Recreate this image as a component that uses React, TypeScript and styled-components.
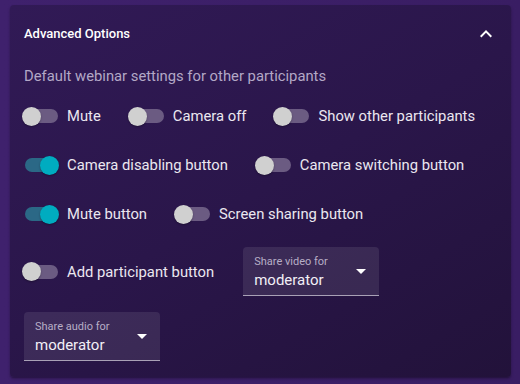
import React, { useState } from 'react';
import styled, { createGlobalStyle } from 'styled-components';

const GlobalStyle = createGlobalStyle`
    html, body {
        margin: 0;
        padding: 0;
    }
    body {
        width: 520px;
        height: 384px;
        overflow: hidden;
        background: linear-gradient(90deg, #3f216d 0%, #391d63 100%);
        font-family: Roboto, "Liberation Sans", Arial, sans-serif;
    }
`;

type Option = { key: string; label: string; on: boolean };

const rows: Option[][] = [
    [
        { key: 'mute', label: 'Mute', on: false },
        { key: 'cameraOff', label: 'Camera off', on: false },
        { key: 'showOthers', label: 'Show other participants', on: false },
    ],
    [
        { key: 'camDisable', label: 'Camera disabling button', on: true },
        { key: 'camSwitch', label: 'Camera switching button', on: false },
    ],
    [
        { key: 'muteBtn', label: 'Mute button', on: true },
        { key: 'screenShare', label: 'Screen sharing button', on: false },
    ],
];

const App = () => {
    const initial: Record<string, boolean> = {};
    rows.flat().forEach(o => (initial[o.key] = o.on));
    const [values, setValues] = useState(initial);
    const [addBtn, setAddBtn] = useState(false);

    const toggle = (key: string) => setValues(v => ({ ...v, [key]: !v[key] }));

    return (
        <>
            <GlobalStyle />
            <Card>
                <Summary>
                    <Title>Advanced Options</Title>
                    <svg width="24" height="24" viewBox="0 0 24 24">
                        <path d="M12 8l-6 6 1.41 1.41L12 10.83l4.59 4.58L18 14z" fill="#ffffff" />
                    </svg>
                </Summary>
                <Details>
                    <Subtitle>Default webinar settings for other participants</Subtitle>
                    {rows.map((row, i) => (
                        <Row key={i}>
                            {row.map(o => (
                                <Toggle
                                    key={o.key}
                                    label={o.label}
                                    checked={values[o.key]}
                                    onChange={() => toggle(o.key)}
                                />
                            ))}
                        </Row>
                    ))}
                    <Row $tall $top={14}>
                        <Toggle label="Add participant button" checked={addBtn} onChange={() => setAddBtn(!addBtn)} />
                        <SelectField label="Share video for" value="moderator" />
                    </Row>
                    <Row $tall $top={16}>
                        <SelectField label="Share audio for" value="moderator" />
                    </Row>
                </Details>
            </Card>
        </>
    );
};

export default App;

const Toggle = ({ label, checked, onChange }: { label: string; checked: boolean; onChange: () => void }) => (
    <Item onClick={onChange}>
        <SwitchBox>
            <Track $on={checked} />
            <Thumb $on={checked} />
        </SwitchBox>
        <Label>{label}</Label>
    </Item>
);

const SelectField = ({ label, value }: { label: string; value: string }) => (
    <Select>
        <SmallLabel>{label}</SmallLabel>
        <Value>{value}</Value>
        <Arrow viewBox="0 0 10 5" width="10" height="5">
            <path d="M0 0l5 5 5-5z" fill="#ffffff" />
        </Arrow>
    </Select>
);

const Card = styled.div`
    margin: 5px 9px 0 10px;
    width: 501px;
    border-radius: 4px;
    background: linear-gradient(150deg, #311a56 0%, #2a164a 50%, #22123a 100%);
    box-shadow: 0 2px 3px rgba(0, 0, 0, 0.25), 0 1px 1px rgba(0, 0, 0, 0.15);
    color: #ffffff;
`;

const Summary = styled.div`
    height: 56px;
    display: flex;
    align-items: center;
    justify-content: space-between;
    padding: 0 13px 0 14px;
    svg {
        margin-top: 1px;
    }
`;

const Title = styled.span`
    font-size: 13px;
    font-weight: 500;
    color: #ffffff;
`;

const Details = styled.div`
    padding: 5px 12px 16px 12px;
`;

const Subtitle = styled.div`
    font-size: 14.8px;
    line-height: 20px;
    color: #b3a8c6;
    padding-left: 2px;
    margin-bottom: 11px;
`;

interface RowProps {
    $tall?: boolean;
    $top?: number;
}
const Row = styled.div<RowProps>`
    display: flex;
    align-items: center;
    column-gap: 27px;
    height: ${props => (props.$tall ? '49px' : '38px')};
    margin-top: ${props => (props.$top !== undefined ? props.$top : 0)}px;
    margin-bottom: ${props => (props.$tall ? 0 : 11)}px;
`;

const Item = styled.label`
    display: flex;
    align-items: center;
    gap: 8px;
    cursor: pointer;
`;

const SwitchBox = styled.span`
    position: relative;
    width: 37px;
    height: 20px;
    flex-shrink: 0;
`;

const Track = styled.span<{ $on: boolean }>`
    position: absolute;
    left: 3px;
    top: 3px;
    width: 33px;
    height: 14px;
    border-radius: 7px;
    background: ${props => (props.$on ? '#2b6886' : '#6b5b82')};
`;

const Thumb = styled.span<{ $on: boolean }>`
    position: absolute;
    top: 0.5px;
    left: ${props => (props.$on ? 18 : 0)}px;
    width: 19px;
    height: 19px;
    border-radius: 50%;
    background: ${props => (props.$on ? '#00acc0' : '#d0d0d0')};
    box-shadow: 0 1px 2px rgba(0, 0, 0, 0.3);
`;

const Label = styled.span`
    font-size: 14.8px;
    font-weight: 400;
    color: #ebe7f0;
    white-space: nowrap;
`;

const Select = styled.div`
    position: relative;
    margin-left: 2px;
    width: 136px;
    height: 48px;
    box-sizing: content-box;
    border-radius: 4px 4px 0 0;
    background: rgba(255, 255, 255, 0.09);
    border-bottom: 1px solid #a9a1b6;
    display: flex;
    flex-direction: column;
    justify-content: center;
`;

const SmallLabel = styled.div`
    font-size: 11px;
    line-height: 13px;
    color: #b7aec6;
    padding-left: 11px;
    margin-top: 2px;
`;

const Value = styled.div`
    font-size: 15px;
    line-height: 20px;
    color: #f2eff6;
    padding-left: 11px;
    margin-top: 2px;
`;

const Arrow = styled.svg`
    position: absolute;
    right: 13px;
    top: 22px;
`;
